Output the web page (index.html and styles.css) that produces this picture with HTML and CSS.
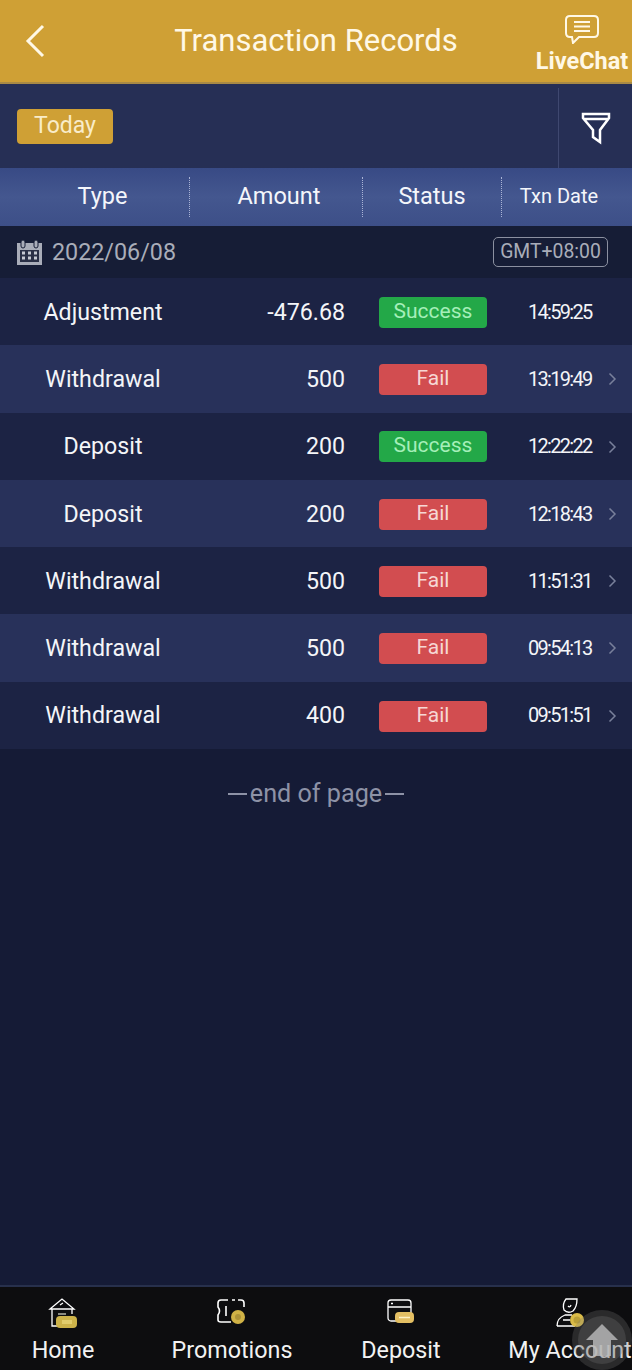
FILE: index.html
```html
<!DOCTYPE html>
<html lang="en">
<head>
    <meta charset="UTF-8">
    <meta name="viewport" content="width=device-width, initial-scale=1.0">
    <title>Transaction Records</title>
    <link rel="stylesheet" href="styles.css">
</head>
<body>
    <div class="page">
        <!-- Top bar -->
        <header class="topbar">
            <svg class="back-icon" width="22" height="34" viewBox="0 0 22 34"><path d="M19 2 L4 17 L19 32" fill="none" stroke="#fff8e6" stroke-width="3"/></svg>
            <h1 class="title">Transaction Records</h1>
            <div class="livechat">
                <svg width="36" height="30" viewBox="0 0 36 30"><path d="M6 2 H30 Q34 2 34 6 V19 Q34 23 30 23 H15 L9 29 L8 23 H6 Q2 23 2 19 V6 Q2 2 6 2 Z" fill="none" stroke="#fff8e6" stroke-width="2"/><path d="M10 8 H26 M10 12.500 H26 M10 17 H26" stroke="#fff8e6" stroke-width="2"/></svg>
                <span>LiveChat</span>
            </div>
        </header>

        <!-- Filter bar -->
        <div class="filterbar">
            <span class="today">Today</span>
            <div class="filter-btn">
                <svg width="30" height="34" viewBox="0 0 30 34"><path d="M2 3 H28 V7 L19 19 V31 L12 26 V19 L2 7 Z M2 8 H28" fill="none" stroke="#fff" stroke-width="2.500" stroke-linejoin="miter"/></svg>
            </div>
        </div>

        <!-- Column headings -->
        <div class="table-head">
            <div class="th th-type">Type</div>
            <div class="th th-amount">Amount</div>
            <div class="th">Status</div>
            <div class="th th-small">Txn Date</div>
        </div>

        <!-- Date row -->
        <div class="date-row">
            <svg width="27" height="27" viewBox="0 0 27 27"><path d="M1 4 H26 V26 H1 Z" fill="#a9adb9"/><rect x="5" y="1" width="4" height="8" rx="2" fill="#a9adb9" stroke="#161d36"/><rect x="18" y="1" width="4" height="8" rx="2" fill="#a9adb9" stroke="#161d36"/><rect x="4" y="11" width="19" height="12" fill="#2a3046"/><path d="M6 14 H9 M12 14 H15 M18 14 H21 M6 19 H9 M12 19 H15 M18 19 H21" stroke="#c6c9d2" stroke-width="3"/></svg>
            <span class="date-text">2022/06/08</span>
            <span class="gmt">GMT+08:00</span>
        </div>

        <!-- Records -->
        <div class="row row-dark">
            <div class="cell-type">Adjustment</div>
            <div class="cell-amount">-476.68</div>
            <div class="cell-status"><span class="badge success">Success</span></div>
            <div class="cell-time">14:59:25</div>
        </div>
        <div class="row row-light">
            <div class="cell-type">Withdrawal</div>
            <div class="cell-amount">500</div>
            <div class="cell-status"><span class="badge fail">Fail</span></div>
            <div class="cell-time">13:19:49</div>
            <svg class="chevron" width="9" height="14" viewBox="0 0 9 14"><path d="M1.500 1.500 L7 7 L1.500 12.500" fill="none" stroke="#79809b" stroke-width="1.500"/></svg>
        </div>
        <div class="row row-dark">
            <div class="cell-type">Deposit</div>
            <div class="cell-amount">200</div>
            <div class="cell-status"><span class="badge success">Success</span></div>
            <div class="cell-time">12:22:22</div>
            <svg class="chevron" width="9" height="14" viewBox="0 0 9 14"><path d="M1.500 1.500 L7 7 L1.500 12.500" fill="none" stroke="#79809b" stroke-width="1.500"/></svg>
        </div>
        <div class="row row-light">
            <div class="cell-type">Deposit</div>
            <div class="cell-amount">200</div>
            <div class="cell-status"><span class="badge fail">Fail</span></div>
            <div class="cell-time">12:18:43</div>
            <svg class="chevron" width="9" height="14" viewBox="0 0 9 14"><path d="M1.500 1.500 L7 7 L1.500 12.500" fill="none" stroke="#79809b" stroke-width="1.500"/></svg>
        </div>
        <div class="row row-dark">
            <div class="cell-type">Withdrawal</div>
            <div class="cell-amount">500</div>
            <div class="cell-status"><span class="badge fail">Fail</span></div>
            <div class="cell-time">11:51:31</div>
            <svg class="chevron" width="9" height="14" viewBox="0 0 9 14"><path d="M1.500 1.500 L7 7 L1.500 12.500" fill="none" stroke="#79809b" stroke-width="1.500"/></svg>
        </div>
        <div class="row row-light">
            <div class="cell-type">Withdrawal</div>
            <div class="cell-amount">500</div>
            <div class="cell-status"><span class="badge fail">Fail</span></div>
            <div class="cell-time">09:54:13</div>
            <svg class="chevron" width="9" height="14" viewBox="0 0 9 14"><path d="M1.500 1.500 L7 7 L1.500 12.500" fill="none" stroke="#79809b" stroke-width="1.500"/></svg>
        </div>
        <div class="row row-dark">
            <div class="cell-type">Withdrawal</div>
            <div class="cell-amount">400</div>
            <div class="cell-status"><span class="badge fail">Fail</span></div>
            <div class="cell-time">09:51:51</div>
            <svg class="chevron" width="9" height="14" viewBox="0 0 9 14"><path d="M1.500 1.500 L7 7 L1.500 12.500" fill="none" stroke="#79809b" stroke-width="1.500"/></svg>
        </div>

        <div class="end-note"><span class="dash"></span>end of page<span class="dash"></span></div>

        <!-- Bottom navigation -->
        <nav class="bottom-nav">
            <div class="nav-item">
                <svg width="30" height="32" viewBox="0 0 30 32"><path d="M2 12 L14 2 L26 12 Z M4 12 V29 H10 M24 12 V17 M12 8 L15 6" fill="none" stroke="#fff" stroke-width="1.300"/><rect x="10" y="16" width="8" height="2" fill="#8a8a80"/><rect x="8" y="19" width="21" height="12" rx="4" fill="#cdb34a"/><path d="M14 23 H24 V27 H14 Z" fill="#e2cd6c"/></svg>
                <span>Home</span>
            </div>
            <div class="nav-item">
                <svg width="30" height="32" viewBox="0 0 30 32"><path d="M4 3 H11 M15 3 H18 M21 3 H24 Q27 3 27 6 V10 M14 25 H4 Q1 25 1 23 V18 Q4 14 1 10 V6 Q1 3 4 3 M9 9 V19" fill="none" stroke="#fff" stroke-width="1.600"/><circle cx="21" cy="20" r="7" fill="#d0b246"/><circle cx="21" cy="20" r="3" fill="#ad9338"/></svg>
                <span>Promotions</span>
            </div>
            <div class="nav-item">
                <svg width="28" height="32" viewBox="0 0 28 32"><rect x="1" y="3" width="23" height="21" rx="3" fill="none" stroke="#fff" stroke-width="1.300"/><path d="M1 10 H24 M4 6.500 H6" stroke="#fff" stroke-width="1.300"/><rect x="8" y="15" width="19" height="11" rx="4" fill="#e3bf63"/><path d="M12 20.500 H23" stroke="#fff3c4" stroke-width="1.500"/></svg>
                <span>Deposit</span>
            </div>
            <div class="nav-item nav-account">
                <svg width="30" height="32" viewBox="0 0 30 32"><path d="M11 2 H22 Q22 10 18 14 Q13 17 9 13 Q7 7 11 2 Z M13 9 Q15 11 16 8 M2 29 Q2 21 10 18 H17 M2 29 H20 M8 23 H15" fill="none" stroke="#fff" stroke-width="1.300"/><circle cx="22" cy="23" r="7" fill="#d9bb48"/><circle cx="22" cy="23" r="3.500" fill="#b99f38"/></svg>
                <span>My Account</span>
            </div>
        </nav>

        <!-- Floating scroll button -->
        <div class="scroll-top">
            <div class="scroll-inner">
                <svg width="36" height="36" viewBox="0 0 36 36"><path d="M18 2 L34 18 H27 V34 H9 V18 H2 Z" fill="#bdbdbd" fill-opacity="0.800"/></svg>
            </div>
        </div>
    </div>
</body>
</html>
```

FILE: styles.css
```css
html, body {
    margin: 0;
    padding: 0;
}

body {
    background-color: #151b36;
    font-family: Roboto, "Liberation Sans", sans-serif;
    color: #fff;
}

.page {
    position: relative;
    width: 632px;
    height: 1370px;
    overflow: hidden;
    display: flex;
    flex-direction: column;
    background-color: #151b36;
}

/* Top bar */
.topbar {
    height: 84px;
    flex: none;
    box-sizing: border-box;
    background-color: #cfa035;
    border-bottom: 2px solid #a98a45;
    display: flex;
    align-items: center;
    padding: 0 4px 0 24px;
}

.back-icon {
    flex: none;
}

.title {
    flex: 1;
    margin: 0 0 2px 0;
    padding-left: 50px;
    font-size: 31px;
    font-weight: 400;
    text-align: center;
    color: #fff8e6;
}

.livechat {
    width: 92px;
    flex: none;
    display: flex;
    flex-direction: column;
    align-items: center;
    gap: 4px;
    font-size: 23.5px;
    font-weight: 700;
    line-height: 26px;
    color: #fff8e6;
    margin-top: 6px;
}

/* Filter bar */
.filterbar {
    height: 84px;
    flex: none;
    background-color: #262f55;
    display: flex;
    align-items: center;
    justify-content: space-between;
    padding-left: 17px;
}

.today {
    width: 96px;
    height: 35px;
    line-height: 33px;
    text-align: center;
    background-color: #cfa035;
    border-radius: 4px;
    font-size: 23px;
    color: #f9ecc9;
}

.filter-btn {
    width: 73px;
    height: 80px;
    margin-top: 4px;
    border-left: 1px solid #3f4870;
    display: flex;
    align-items: center;
    justify-content: center;
}

/* Column headings */
.table-head {
    height: 58px;
    flex: none;
    display: grid;
    grid-template-columns: 190px 173px 139px 1fr;
    align-items: center;
    background: linear-gradient(#384a85, #44578f 50%, #3d4f88);
}

.th {
    height: 40px;
    line-height: 38px;
    text-align: center;
    font-size: 23.5px;
    color: #f4f6fb;
    border-right: 1px dotted #aab4d6;
}

.th-type {
    padding-left: 16px;
}

.th-amount {
    padding-left: 6px;
}

.th-small {
    font-size: 20px;
    padding-right: 16px;
    border-right: none;
}

/* Date row */
.date-row {
    height: 52px;
    flex: none;
    box-sizing: border-box;
    display: flex;
    align-items: center;
    padding: 0 24px 0 16px;
    background-color: #161d36;
}

.date-text {
    flex: 1;
    margin-left: 9px;
    font-size: 23.3px;
    color: #a9adb9;
}

.gmt {
    width: 113px;
    height: 28px;
    line-height: 27px;
    text-align: center;
    border: 1px solid #8b90a0;
    border-radius: 5px;
    font-size: 19.4px;
    color: #a9adb9;
}

/* Records */
.row {
    position: relative;
    height: 67.3px;
    flex: none;
    display: grid;
    grid-template-columns: 206px 139px 176px 1fr;
    align-items: center;
    font-size: 23.2px;
}

.row-dark {
    background-color: #1c2344;
}

.row-light {
    background-color: #28315a;
}

.cell-type {
    text-align: center;
    color: #f4f5f8;
}

.cell-amount {
    text-align: right;
    color: #f4f5f8;
}

.cell-status {
    text-align: center;
    padding-top: 1px;
}

.badge {
    display: inline-block;
    width: 108px;
    height: 31px;
    line-height: 29px;
    border-radius: 4px;
    font-size: 21px;
    text-align: center;
    vertical-align: middle;
}

.success {
    background-color: #23a848;
    color: #a5efb9;
}

.fail {
    background-color: #d24d50;
    color: #f6d7d4;
}

.cell-time {
    padding-left: 7px;
    font-size: 20px;
    letter-spacing: -1.7px;
    color: #f4f5f8;
}

.chevron {
    position: absolute;
    right: 15px;
    top: 27px;
}

.end-note {
    margin-top: 30px;
    display: flex;
    align-items: center;
    justify-content: center;
    gap: 3px;
    font-size: 25.2px;
    color: #8d92a6;
}

.dash {
    width: 19px;
    height: 2px;
    background-color: #8d92a6;
}

/* Bottom navigation */
.bottom-nav {
    margin-top: auto;
    height: 83px;
    flex: none;
    border-top: 2px solid #27304c;
    background-color: #0d0d0f;
    display: grid;
    grid-template-columns: 126px 212px 126px 1fr;
}

.nav-item {
    display: flex;
    flex-direction: column;
    align-items: center;
    font-size: 23.3px;
    color: #f2f2f2;
}

.nav-item svg {
    height: 32px;
    margin-top: 10px;
}

.nav-item span {
    margin-top: 5px;
    line-height: 32px;
    white-space: nowrap;
}

.nav-account {
    padding-left: 44px;
}

.scroll-top {
    position: absolute;
    left: 572px;
    top: 1310px;
    width: 60px;
    height: 60px;
    border-radius: 50%;
    background-color: rgba(120, 120, 120, 0.28);
    display: flex;
    align-items: center;
    justify-content: center;
}

.scroll-inner {
    width: 48px;
    height: 48px;
    border-radius: 50%;
    background-color: rgba(120, 120, 120, 0.28);
    display: flex;
    align-items: center;
    justify-content: center;
}
```
